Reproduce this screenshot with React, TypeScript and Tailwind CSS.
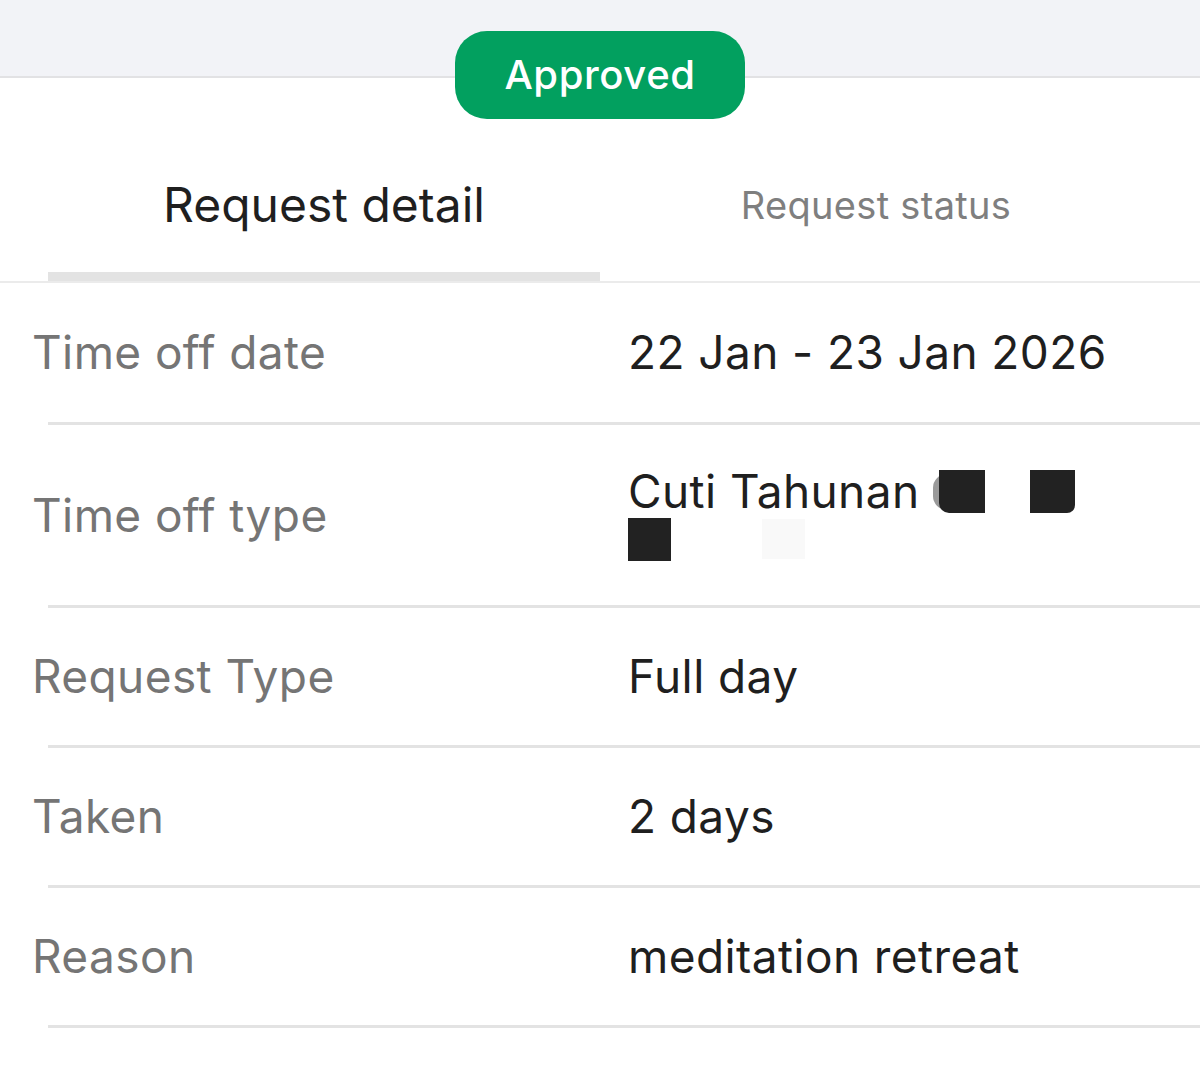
const rows = [
  { label: 'Time off date', value: '22 Jan - 23 Jan 2026', h: 'h-[139px]' },
  { label: 'Time off type', value: 'type', h: 'h-[180px]' },
  { label: 'Request Type', value: 'Full day', h: 'h-[137px]' },
  { label: 'Taken', value: '2 days', h: 'h-[137px]' },
  { label: 'Reason', value: 'meditation retreat', h: 'h-[137px]' },
];

function Redacted() {
  return (
    <div className="flex flex-col">
      <div className="flex items-center h-[48px]">
        <span>Cuti Tahunan</span>
        <span className="ml-[14px] relative inline-block w-[52px] h-[43px]">
          <span className="absolute left-0 top-[4px] w-[14px] h-[36px] rounded-l-full bg-[#9a9a9a]" />
          <span className="absolute left-[6px] top-0 w-[46px] h-[43px] bg-[#222] rounded-bl-[10px]" />
        </span>
        <span className="ml-[45px] inline-block w-[45px] h-[43px] bg-[#222] rounded-br-[8px]" />
      </div>
      <div className="flex items-center h-[48px]">
        <span className="inline-block w-[43px] h-[43px] bg-[#222]" />
        <span className="ml-[91px] inline-block w-[43px] h-[40px] bg-[#f9f9f9]" />
      </div>
    </div>
  );
}

export default function App() {
  return (
    <div className="w-[1200px] h-[1081px] bg-white overflow-hidden" style={{ fontFamily: 'Inter, "Noto Sans", sans-serif' }}>
      {/* header band with status badge */}
      <div className="relative">
        <div className="h-[76px] bg-[#f2f3f7]" />
        <div className="h-[2px] bg-[#e2e2e4]" />
        <div className="absolute left-[455px] top-[31px] w-[290px] h-[88px] rounded-[32px] bg-[#02a05f] flex items-center justify-center">
          <span className="text-white text-[40px] font-medium tracking-[0.6px]">Approved</span>
        </div>
      </div>

      {/* tabs */}
      <div className="mt-[42px] px-12 flex">
        <div className="w-[552px] flex flex-col items-center">
          <div className="h-[152px] flex items-center text-[48px] text-[#1f1f1f] pt-[18px]">Request detail</div>
          <div className="w-full h-[9px] bg-[#e3e3e3]" />
        </div>
        <div className="w-[552px] flex flex-col items-center">
          <div className="h-[152px] flex items-center text-[38px] text-[#7f7f7f] tracking-[0.3px] pt-[18px]">Request status</div>
        </div>
      </div>
      <div className="h-[2px] bg-[#ebebeb]" />

      {/* detail rows */}
      {rows.map((r) => (
        <div key={r.label}>
          <div className={`flex items-center px-8 ${r.h}`}>
            <div className="w-[596px] text-[46px] text-[#757575] tracking-[0.4px]">{r.label}</div>
            <div className="text-[46px] text-[#1f1f1f] tracking-[0.4px]">
              {r.value === 'type' ? <Redacted /> : r.value}
            </div>
          </div>
          <div className="ml-12 h-[3px] bg-[#e3e3e3]" />
        </div>
      ))}
    </div>
  );
}
